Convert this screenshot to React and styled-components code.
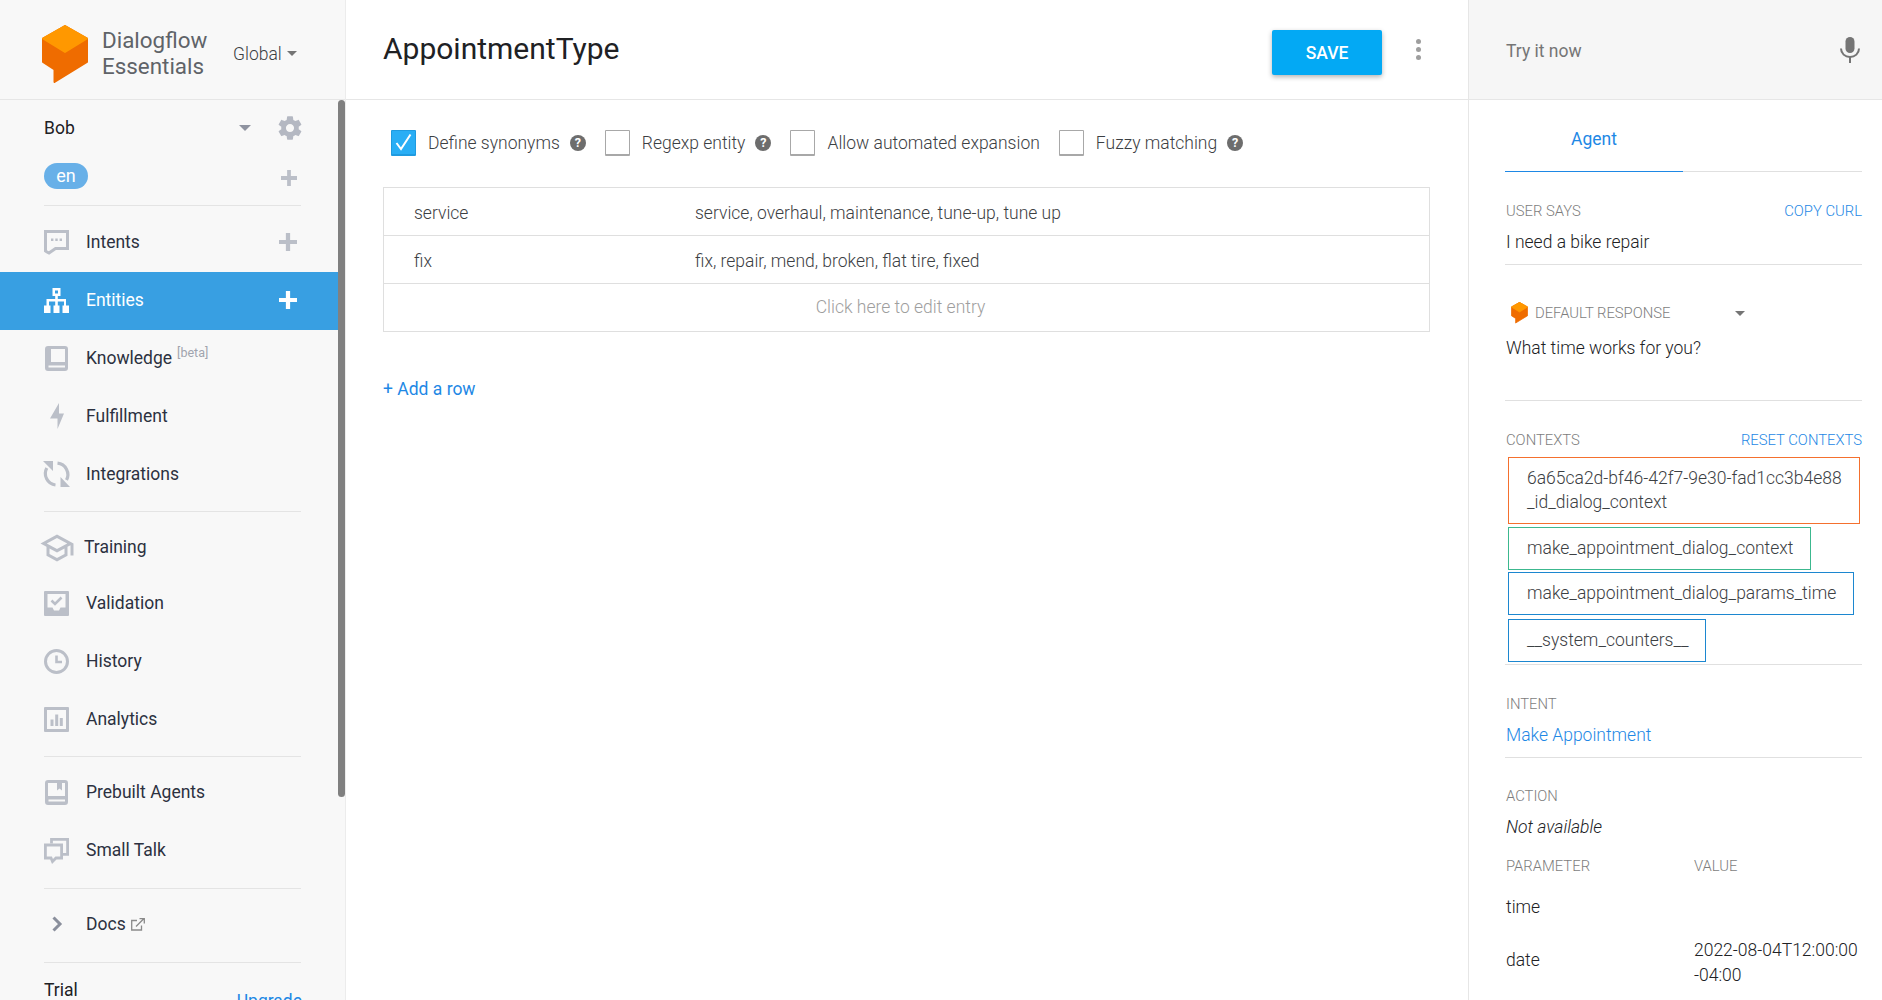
import React from 'react';
import styled, { createGlobalStyle } from 'styled-components';

const GlobalStyle = createGlobalStyle`
  html, body { margin: 0; padding: 0; height: 100%; overflow: hidden; background: #fff; }
  body { font-family: Roboto, "Liberation Sans", sans-serif; color: #202124; }
  * { box-sizing: border-box; }
`;

const Page = styled.div`
  display: flex;
  width: 1882px;
  height: 1000px;
  overflow: hidden;
`;

/* sidebar */
const Sidebar = styled.aside`
  width: 346px;
  flex: none;
  display: flex;
  flex-direction: column;
  background: #f8f8f8;
  border-right: 1px solid #ececec;
`;

const Brand = styled.div`
  height: 100px;
  flex: none;
  display: flex;
  align-items: center;
  padding: 8px 0 0 42px;
  border-bottom: 1px solid #e6e6e6;
`;

const BrandName = styled.div`
  margin-left: 14px;
  margin-bottom: 2px;
  width: 131px;
  font-size: 22.4px;
  line-height: 26px;
  color: #5f6368;
`;

const Region = styled.div`
  display: flex;
  align-items: center;
  font-size: 17.5px;
  font-weight: 300;
  color: #3c4043;
`;

const Caret = styled.span`
  display: inline-block;
  flex: none;
  width: 0;
  height: 0;
  margin-left: ${(p) => p.$left || 0}px;
  margin-right: ${(p) => p.$right || 0}px;
  border-left: ${(p) => p.$size || 6}px solid transparent;
  border-right: ${(p) => p.$size || 6}px solid transparent;
  border-top: ${(p) => p.$size || 6}px solid ${(p) => p.$color || '#757575'};
`;

const SideBody = styled.div`
  flex: 1;
  display: flex;
  min-height: 0;
`;

const Nav = styled.nav`
  width: 338px;
  flex: none;
`;

const ScrollTrack = styled.div`
  width: 7px;
  flex: none;
`;

const ScrollThumb = styled.div`
  height: 697px;
  background: #808080;
  border-radius: 4px;
`;

const AgentRow = styled.div`
  height: 56px;
  display: flex;
  align-items: center;
  padding: 0 34px 0 44px;
  font-size: 17.5px;
  color: #202124;
`;

const AgentName = styled.span`
  flex: 1;
`;

const LangRow = styled.div`
  height: 49px;
  display: flex;
  align-items: center;
  justify-content: space-between;
  padding: 0 41px 10px 44px;
`;

const LangPlus = styled.span`
  padding-top: 4px;
`;

const LangPill = styled.span`
  width: 44px;
  height: 26px;
  border-radius: 13px;
  background: #68b0e8;
  color: #fff;
  font-size: 18px;
  display: flex;
  align-items: center;
  justify-content: center;
  padding-bottom: 1px;
`;

const Rule = styled.div`
  height: 1px;
  margin: ${(p) => p.$top || 0}px 37px ${(p) => p.$bottom || 0}px 44px;
  background: #e4e4e4;
`;

const NavItem = styled.div`
  height: ${(p) => p.$height || 58}px;
  display: flex;
  align-items: center;
  padding: 0 41px 2px 44px;
  font-size: 17.5px;
  color: ${(p) => (p.$active ? '#fff' : '#2c3140')};
  background: ${(p) => (p.$active ? '#389fe2' : 'transparent')};
`;

const NavIcon = styled.span`
  width: 25px;
  height: 25px;
  flex: none;
  margin-right: ${(p) => p.$gap || 17}px;
  display: flex;
  align-items: center;
  justify-content: center;
  color: ${(p) => (p.$active ? '#fff' : '#bbbfc8')};
  svg { display: block; overflow: visible; flex: none; }
`;

const NavLabel = styled.span`
  flex: 1;
  white-space: nowrap;
`;

const Beta = styled.sup`
  font-size: 12.5px;
  color: #a0a4ae;
  margin-left: 5px;
  vertical-align: 7px;
  line-height: 0;
`;

const PlusMark = styled.svg`
  display: block;
  color: ${(p) => p.$color || '#bbbfc8'};
  flex: none;
`;

const LinkMark = styled.svg`
  margin-left: 5px;
  vertical-align: -1px;
`;

const TrialRow = styled.div`
  display: flex;
  justify-content: space-between;
  padding: 17px 36px 0 44px;
  font-size: 17.5px;
  line-height: 20px;
  color: #202124;
`;

const Upgrade = styled.span`
  color: #1e88e5;
  padding-top: 11px;
`;

/* middle */
const Main = styled.main`
  flex: 1;
  min-width: 0;
  background: #fff;
`;

const MainHeader = styled.header`
  height: 100px;
  display: flex;
  align-items: center;
  padding: 0 47px 0 37px;
  border-bottom: 1px solid #e6e6e6;
`;

const Title = styled.h1`
  flex: 1;
  margin: 0 0 3px;
  font-size: 30px;
  font-weight: 400;
  color: #202124;
`;

const SaveButton = styled.button`
  width: 110px;
  height: 45px;
  margin: 5px 34px 0 0;
  padding: 2px 0 0;
  border: 0;
  border-radius: 2px;
  background: #03a9f4;
  color: #fff;
  font: 500 17.5px Roboto, sans-serif;
  box-shadow: 0 2px 5px rgba(0, 0, 0, 0.3);
`;

const Dots = styled.div`
  display: flex;
  flex-direction: column;
  gap: 3px;
  margin-bottom: 1px;
  span { width: 5px; height: 5px; border-radius: 50%; background: #9e9e9e; }
`;

const Options = styled.div`
  display: flex;
  align-items: center;
  height: 86px;
  padding: 0 0 1px 45px;
`;

const Check = styled.span`
  width: 25px;
  height: 26px;
  flex: none;
  display: flex;
  align-items: center;
  justify-content: center;
  margin-right: 12px;
  background: ${(p) => (p.$on ? '#29aef5' : '#fff')};
  border: 1px solid ${(p) => (p.$on ? '#1f9be0' : '#a8a8a8')};
  border-bottom-width: 2px;
  border-radius: 1px;
`;

const OptionLabel = styled.span`
  font-size: 17.5px;
  font-weight: 300;
  color: #3c4043;
  white-space: nowrap;
`;

const Help = styled.span`
  width: 16px;
  height: 16px;
  flex: none;
  margin: 0 19px 0 10px;
  border-radius: 50%;
  background: #6d6d6d;
  color: #fff;
  font-size: 12.5px;
  font-weight: 700;
  display: flex;
  align-items: center;
  justify-content: center;
`;

const Option = styled.label`
  display: flex;
  align-items: center;
  margin-right: ${(p) => p.$after || 0}px;
`;

const EntryTable = styled.div`
  margin: 1px 38px 0 37px;
  border: 1px solid #dfdfdf;
`;

const EntryRow = styled.div`
  height: 48px;
  display: flex;
  align-items: center;
  padding-top: 2px;
  font-size: 17.5px;
  font-weight: 300;
  color: #3c4043;
  border-bottom: 1px solid #dfdfdf;
  &:last-child { border-bottom: 0; height: 47px; padding-top: 0; }
`;

const EntryName = styled.span`
  width: 311px;
  padding-left: 30px;
`;

const EditHint = styled.span`
  flex: 1;
  text-align: center;
  padding: 0 12px 1px 0;
  color: #9e9e9e;
`;

const AddRow = styled.div`
  margin: 47px 0 0 37px;
  font-size: 17.5px;
  font-weight: 400;
  color: #1e88e5;
`;

/* right */
const Console = styled.aside`
  width: 414px;
  flex: none;
  background: #fff;
  border-left: 1px solid #e6e6e6;
`;

const TryBar = styled.div`
  height: 100px;
  display: flex;
  align-items: center;
  justify-content: space-between;
  padding: 0 22px 0 37px;
  background: #f6f6f6;
  border-bottom: 1px solid #e6e6e6;
  font-size: 17.5px;
  color: #757575;
`;

const TryLabel = styled.span`
  padding-top: 2px;
`;

const ConsoleBody = styled.div`
  padding: 0 20px 0 37px;
`;

const Tabs = styled.div`
  height: 72px;
  margin-left: -1px;
  border-bottom: 1px solid #e0e0e0;
`;

const Tab = styled.div`
  width: 178px;
  height: 72px;
  display: flex;
  align-items: center;
  justify-content: center;
  padding-top: 6px;
  font-size: 17.5px;
  color: #1e88e5;
  border-bottom: 1px solid #1e88e5;
`;

const SectionHead = styled.div`
  display: flex;
  align-items: center;
  justify-content: space-between;
  height: 17px;
  margin-top: ${(p) => p.$top || 0}px;
  font-size: 14.8px;
  font-weight: 300;
  color: #7d7d7d;
`;

const HeadLink = styled.span`
  color: #1e88e5;
`;

const BodyText = styled.div`
  margin-top: ${(p) => p.$top || 0}px;
  font-size: 17.5px;
  line-height: 20px;
  font-weight: 300;
  color: ${(p) => (p.$link ? '#1e88e5' : '#202124')};
  font-style: ${(p) => (p.$italic ? 'italic' : 'normal')};
`;

const SectionRule = styled.div`
  height: 1px;
  margin: ${(p) => p.$top || 0}px 0 0 -1px;
  background: #e0e0e0;
`;

const ResponseHead = styled.div`
  display: flex;
  align-items: center;
  height: 20px;
  margin-top: ${(p) => p.$top || 0}px;
  padding-left: 5px;
  font-size: 14.8px;
  font-weight: 300;
  color: #7d7d7d;
`;

const ResponseLabel = styled.span`
  margin-left: 7px;
  margin-right: 65px;
`;

const ContextList = styled.div`
  display: flex;
  flex-direction: column;
  align-items: flex-start;
  margin: 9px 0 0 2px;
`;

const ContextChip = styled.div`
  width: ${(p) => p.$width}px;
  margin-bottom: ${(p) => p.$after}px;
  padding: 8px 10px 9px 18px;
  border: 1px solid ${(p) => p.$color};
  font-size: 17.5px;
  line-height: 24px;
  font-weight: 300;
  color: #3c4043;
  white-space: nowrap;
`;

const ParamRow = styled.div`
  display: grid;
  grid-template-columns: 188px 1fr;
  align-items: center;
  margin-top: ${(p) => p.$top || 0}px;
  font-size: ${(p) => (p.$head ? 14.8 : 17.5)}px;
  line-height: ${(p) => (p.$head ? 17 : 25)}px;
  font-weight: 300;
  color: ${(p) => (p.$head ? '#7d7d7d' : '#202124')};
`;

const ParamKey = styled.span`
  padding-bottom: ${(p) => p.$lift || 0}px;
`;

/* drawings */
const LogoMark = ({ size = 46 }) => (
  <svg width={size} height={(size * 58) / 46} viewBox="0 0 46 58">
    <path d="M23 1 45 13.500V37L12.500 57V44.500L1 37V13.500z" fill="#ef6c00" stroke="#ef6c00" strokeWidth="2" strokeLinejoin="round" />
    <path d="M23 1 45 13.500 23 27 1 13.500z" fill="#ff9800" stroke="#ff9800" strokeWidth="2" strokeLinejoin="round" />
  </svg>
);

const Plus = ({ size = 17, color, weight = 4 }) => (
  <PlusMark $color={color} width={size} height={size} viewBox="0 0 17 17">
    <path d="M8.500 0v17M0 8.500h17" stroke="currentColor" strokeWidth={weight} />
  </PlusMark>
);

const Gear = () => (
  <svg width="28" height="28" viewBox="0 0 24 24" fill="#b4b8c2">
    <path d="M19.430 12.980c.040-.320.070-.640.070-.980s-.030-.660-.070-.980l2.110-1.650c.190-.150.240-.420.120-.640l-2-3.460c-.120-.220-.390-.300-.610-.220l-2.490 1c-.520-.400-1.080-.730-1.690-.980l-.380-2.650C14.460 2.180 14.250 2 14 2h-4c-.250 0-.460.180-.490.420l-.380 2.650c-.610.250-1.170.590-1.690.980l-2.490-1c-.230-.090-.490 0-.610.220l-2 3.460c-.130.220-.070.490.120.640l2.110 1.650c-.040.320-.070.650-.070.980s.030.660.070.980l-2.110 1.650c-.190.150-.240.420-.120.640l2 3.460c.120.220.390.300.610.220l2.490-1c.520.400 1.080.730 1.690.980l.380 2.650c.030.240.240.420.490.420h4c.250 0 .460-.180.490-.420l.380-2.650c.610-.250 1.170-.590 1.690-.980l2.490 1c.230.090.490 0 .610-.220l2-3.460c.120-.220.070-.490-.120-.640l-2.110-1.650zM12 15.500c-1.930 0-3.500-1.570-3.500-3.500s1.570-3.500 3.500-3.500 3.500 1.570 3.500 3.500-1.570 3.500-3.500 3.500z" />
  </svg>
);

const IntentsIcon = () => (
  <svg width="25" height="25" viewBox="0 0 25 25" fill="none">
    <path d="M1.500 1.500h22v17H11.500L5 23l-2-1-1.500-1z" stroke="currentColor" strokeWidth="3" />
    <path d="M7 8.500h2.400v2.400H7zM11.300 8.500h2.400v2.400h-2.400zM15.600 8.500H18v2.400h-2.400z" fill="currentColor" />
  </svg>
);

const EntitiesIcon = () => (
  <svg width="25" height="25" viewBox="0 0 25 25" fill="currentColor">
    <path fillRule="evenodd" d="M8.500 0h8v8h-2.700v3H22v6.500h3V25h-6.500v-7.500h1.500V13.500h-6.200v4H15.500V25h-6v-7.500h1.700v-4H5v4h1.500V25H0v-7.500h2.500V11h8.700V8H8.500zM11 2.500v3h3v-3z" />
  </svg>
);

const KnowledgeIcon = () => (
  <svg width="23" height="25" viewBox="0 0 23 25" fill="none">
    <path fillRule="evenodd" d="M3 0h17a3 3 0 0 1 3 3v19a3 3 0 0 1-3 3H3a3 3 0 0 1-3-3V3a3 3 0 0 1 3-3zm3 3v13h14V3zM3.500 19.500v2h16.500v-2z" fill="currentColor" />
  </svg>
);

const BoltIcon = () => (
  <svg width="14" height="26" viewBox="0 0 14 26" fill="currentColor">
    <path d="M9 0v10.500h5L7.500 26V15.500H0z" />
  </svg>
);

const SyncIcon = () => (
  <svg width="27" height="26" viewBox="0 0 27 26" fill="none">
    <path d="M3.800 7A11.500 11.500 0 0 0 12.500 24" stroke="currentColor" strokeWidth="3.200" />
    <path d="M14.500 2.200A11.500 11.500 0 0 1 23.500 19" stroke="currentColor" strokeWidth="3.200" />
    <path d="M0 0h10v10zM27 26H17.500V16z" fill="currentColor" />
  </svg>
);

const SchoolIcon = () => (
  <svg width="36" height="33" viewBox="0 0 24 22" fill="currentColor">
    <path d="M12 3L1 9l4 2.180v6L12 21l7-3.820v-6l2-1.090V17h2V9L12 3zm6.820 6L12 12.720 5.180 9 12 5.280 18.820 9zM17 15.990l-5 2.730-5-2.730v-3.720L12 15l5-2.730v3.720z" />
  </svg>
);

const ValidationIcon = () => (
  <svg width="25" height="25" viewBox="0 0 25 25">
    <path fillRule="evenodd" d="M1 0h23a1 1 0 0 1 1 1v23a1 1 0 0 1-1 1H1a1 1 0 0 1-1-1V1a1 1 0 0 1 1-1zm2.500 3v13.500h5l1.500 3h5l1.500-3h5V3z" fill="currentColor" />
    <path d="M7.500 9.500l3.500 3.500 6.500-6.500" fill="none" stroke="currentColor" strokeWidth="2.600" />
  </svg>
);

const ClockIcon = () => (
  <svg width="25" height="25" viewBox="0 0 25 25" fill="none" stroke="currentColor">
    <circle cx="12.500" cy="12.500" r="11" strokeWidth="3" />
    <path d="M12.500 6.500v6.500H18" strokeWidth="2.600" />
  </svg>
);

const AnalyticsIcon = () => (
  <svg width="25" height="25" viewBox="0 0 25 25" fill="currentColor">
    <path fillRule="evenodd" d="M1 0h23a1 1 0 0 1 1 1v23a1 1 0 0 1-1 1H1a1 1 0 0 1-1-1V1a1 1 0 0 1 1-1zm2 3v19h19V3z" />
    <path d="M6.500 12.500h3V19h-3zM11.200 7.500h3V19h-3zM15.800 11h3v8h-3z" />
  </svg>
);

const PrebuiltIcon = () => (
  <svg width="23" height="25" viewBox="0 0 23 25" fill="none">
    <path fillRule="evenodd" d="M3 0h17a3 3 0 0 1 3 3v19a3 3 0 0 1-3 3H3a3 3 0 0 1-3-3V3a3 3 0 0 1 3-3zm0 3v13h17V3h-3v7.500l-2.500-2-2.500 2V3zM3.500 19.500v2h16.500v-2z" fill="currentColor" />
  </svg>
);

const SmallTalkIcon = () => (
  <svg width="25" height="25" viewBox="0 0 25 25" fill="none" stroke="currentColor" strokeWidth="2.800">
    <path d="M7.500 5.500V1.400h16.100v15H19" />
    <path d="M1.400 7h16.200v13H12l-3.500 3.500-1.500-3.500H1.400z" />
  </svg>
);

const Chevron = () => (
  <svg width="12" height="16" viewBox="0 0 12 16" fill="none">
    <path d="M2.500 1.500 9 8l-6.500 6.500" stroke="#8a8f9c" strokeWidth="3" />
  </svg>
);

const ExternalLink = () => (
  <LinkMark width="14" height="13" viewBox="0 0 14 13" fill="none" stroke="#8a8a8a" strokeWidth="1.300">
    <path d="M10.500 7.500v4.500H.7V2.500H6" />
    <path d="M5 8.500 12.500 1M8.500.7h4.800v4.800" />
  </LinkMark>
);

const Mic = () => (
  <svg width="20" height="26" viewBox="0 0 20 26" fill="#757575">
    <rect x="5.500" y="0" width="9" height="16" rx="4.500" />
    <path d="M1 11.500c0 5 4 8.500 9 8.500s9-3.500 9-8.500" fill="none" stroke="#757575" strokeWidth="2" />
    <rect x="9" y="19" width="2" height="7" />
  </svg>
);

const Tick = () => (
  <svg width="17" height="18" viewBox="0 0 17 18" fill="none">
    <path d="M1.500 10 6 16 15.500 1.500" stroke="#fff" strokeWidth="2" />
  </svg>
);

const upperNav = [
  { label: 'Intents', icon: <IntentsIcon />, plus: true },
  { label: 'Entities', icon: <EntitiesIcon />, plus: true, active: true },
  { label: 'Knowledge', icon: <KnowledgeIcon />, beta: true },
  { label: 'Fulfillment', icon: <BoltIcon /> },
  { label: 'Integrations', icon: <SyncIcon /> },
];

const trainNav = [
  { label: 'Validation', icon: <ValidationIcon /> },
  { label: 'History', icon: <ClockIcon /> },
  { label: 'Analytics', icon: <AnalyticsIcon /> },
];

const extraNav = [
  { label: 'Prebuilt Agents', icon: <PrebuiltIcon /> },
  { label: 'Small Talk', icon: <SmallTalkIcon /> },
];

const options = [
  { label: 'Define synonyms', on: true, help: true },
  { label: 'Regexp entity', help: true },
  { label: 'Allow automated expansion', after: 19 },
  { label: 'Fuzzy matching', help: true },
];

const contexts = [
  { lines: ['6a65ca2d-bf46-42f7-9e30-fad1cc3b4e88', '_id_dialog_context'], color: '#f4702e', width: 352, after: 3 },
  { lines: ['make_appointment_dialog_context'], color: '#3cb88f', width: 303, after: 2 },
  { lines: ['make_appointment_dialog_params_time'], color: '#1c87d0', width: 346, after: 4 },
  { lines: ['__system_counters__'], color: '#1c87d0', width: 198, after: 0 },
];

const NavEntry = ({ item }) => (
  <NavItem $active={item.active}>
    <NavIcon $active={item.active}>{item.icon}</NavIcon>
    <NavLabel>
      {item.label}
      {item.beta && <Beta>[beta]</Beta>}
    </NavLabel>
    {item.plus && <Plus size={18} color={item.active ? '#fff' : '#bbbfc8'} />}
  </NavItem>
);

export default function App() {
  return (
    <Page>
      <GlobalStyle />
      <Sidebar>
        <Brand>
          <LogoMark />
          <BrandName>Dialogflow Essentials</BrandName>
          <Region>
            Global
            <Caret $size={5} $left={5} />
          </Region>
        </Brand>
        <SideBody>
          <Nav>
            <AgentRow>
              <AgentName>Bob</AgentName>
              <Caret $size={6} $color="#8f93a0" $right={25} />
              <Gear />
            </AgentRow>
            <LangRow>
              <LangPill>en</LangPill>
              <LangPlus><Plus size={16} /></LangPlus>
            </LangRow>
            <Rule $bottom={8} />
            {upperNav.map((item) => <NavEntry key={item.label} item={item} />)}
            <Rule $top={7} $bottom={8} />
            <NavItem $height={55}>
              <NavIcon $gap={15}><SchoolIcon /></NavIcon>
              <NavLabel>Training</NavLabel>
            </NavItem>
            {trainNav.map((item) => <NavEntry key={item.label} item={item} />)}
            <Rule $top={7} $bottom={7} />
            {extraNav.map((item) => <NavEntry key={item.label} item={item} />)}
            <Rule $top={8} $bottom={7} />
            <NavItem>
              <NavIcon><Chevron /></NavIcon>
              <NavLabel>Docs<ExternalLink /></NavLabel>
            </NavItem>
            <Rule $top={8} />
            <TrialRow>
              <span>Trial</span>
              <Upgrade>Upgrade</Upgrade>
            </TrialRow>
          </Nav>
          <ScrollTrack>
            <ScrollThumb />
          </ScrollTrack>
        </SideBody>
      </Sidebar>

      <Main>
        <MainHeader>
          <Title>AppointmentType</Title>
          <SaveButton>SAVE</SaveButton>
          <Dots><span /><span /><span /></Dots>
        </MainHeader>
        <Options>
          {options.map((o) => (
            <Option key={o.label} $after={o.after}>
              <Check $on={o.on}>{o.on && <Tick />}</Check>
              <OptionLabel>{o.label}</OptionLabel>
              {o.help && <Help>?</Help>}
            </Option>
          ))}
        </Options>
        <EntryTable>
          <EntryRow>
            <EntryName>service</EntryName>
            <span>service, overhaul, maintenance, tune-up, tune up</span>
          </EntryRow>
          <EntryRow>
            <EntryName>fix</EntryName>
            <span>fix, repair, mend, broken, flat tire, fixed</span>
          </EntryRow>
          <EntryRow>
            <EditHint>Click here to edit entry</EditHint>
          </EntryRow>
        </EntryTable>
        <AddRow>+ Add a row</AddRow>
      </Main>

      <Console>
        <TryBar>
          <TryLabel>Try it now</TryLabel>
          <Mic />
        </TryBar>
        <ConsoleBody>
          <Tabs>
            <Tab>Agent</Tab>
          </Tabs>
          <SectionHead $top={30}>
            <span>USER SAYS</span>
            <HeadLink>COPY CURL</HeadLink>
          </SectionHead>
          <BodyText $top={13}>I need a bike repair</BodyText>
          <SectionRule $top={12} />
          <ResponseHead $top={38}>
            <LogoMark size={17} />
            <ResponseLabel>DEFAULT RESPONSE</ResponseLabel>
            <Caret $size={5} />
          </ResponseHead>
          <BodyText $top={15}>What time works for you?</BodyText>
          <SectionRule $top={42} />
          <SectionHead $top={30}>
            <span>CONTEXTS</span>
            <HeadLink>RESET CONTEXTS</HeadLink>
          </SectionHead>
          <ContextList>
            {contexts.map((c) => (
              <ContextChip key={c.lines[0]} $color={c.color} $width={c.width} $after={c.after}>
                {c.lines.map((line) => <div key={line}>{line}</div>)}
              </ContextChip>
            ))}
          </ContextList>
          <SectionRule $top={2} />
          <SectionHead $top={30}>
            <span>INTENT</span>
          </SectionHead>
          <BodyText $top={13} $link>Make Appointment</BodyText>
          <SectionRule $top={12} />
          <SectionHead $top={29}>
            <span>ACTION</span>
          </SectionHead>
          <BodyText $top={13} $italic>Not available</BodyText>
          <ParamRow $head $top={21}>
            <span>PARAMETER</span>
            <span>VALUE</span>
          </ParamRow>
          <ParamRow $top={20}>
            <span>time</span>
            <span />
          </ParamRow>
          <ParamRow $top={18}>
            <ParamKey $lift={5}>date</ParamKey>
            <span>2022-08-04T12:00:00<br />-04:00</span>
          </ParamRow>
        </ConsoleBody>
      </Console>
    </Page>
  );
}
